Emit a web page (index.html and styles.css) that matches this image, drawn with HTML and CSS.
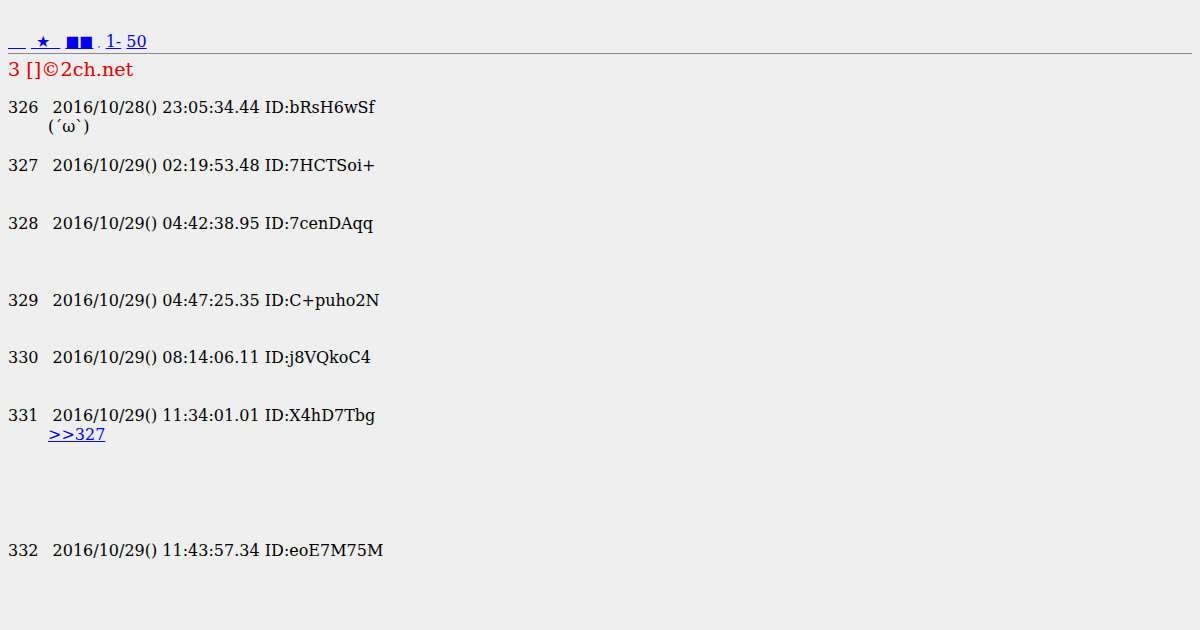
FILE: index.html
```html
<!DOCTYPE html>
<html>
<head>
<meta charset="utf-8">
<title>3 []©2ch.net</title>
<link rel="stylesheet" href="styles.css">
</head>
<body>
<div class="topnav"><a href="#" class="gap1">&nbsp;&nbsp;&nbsp;&nbsp;</a> <a href="#">&nbsp;★&nbsp;&nbsp;</a> <a href="#" class="sq">■■</a><span class="comma">,</span> <a href="#">1-</a> <a href="#">50</a></div>
<hr class="rule">
<h1 class="title">3 []©2ch.net</h1>
<dl class="thread">
<dt><span class="num">326</span>2016/10/28() 23:05:34.44 ID:bRsH6wSf</dt>
<dd>(´ω`)<br><br></dd>
<dt><span class="num">327</span>2016/10/29() 02:19:53.48 ID:7HCTSoi+</dt>
<dd><br><br></dd>
<dt><span class="num">328</span>2016/10/29() 04:42:38.95 ID:7cenDAqq</dt>
<dd><br><br><br></dd>
<dt><span class="num">329</span>2016/10/29() 04:47:25.35 ID:C+puho2N</dt>
<dd><br><br></dd>
<dt><span class="num">330</span>2016/10/29() 08:14:06.11 ID:j8VQkoC4</dt>
<dd><br><br></dd>
<dt><span class="num">331</span>2016/10/29() 11:34:01.01 ID:X4hD7Tbg</dt>
<dd><a href="#">&gt;&gt;327</a><br><br><br><br><br><br></dd>
<dt><span class="num">332</span>2016/10/29() 11:43:57.34 ID:eoE7M75M</dt>
<dd><br><br></dd>
</dl>
</body>
</html>
```
FILE: styles.css
```css
html, body {
  background: #efefef;
}
body {
  margin: 8px;
  color: #000;
  font-family: "DejaVu Serif", serif;
  font-size: 16px;
}
a {
  color: #0000ee;
}
.topnav {
  padding-top: 24px;
  white-space: nowrap;
  height: 19px;
}
.gap1 {
  font-size: 14.1px;
}
.sq {
  font-family: "Noto Sans CJK JP", "DejaVu Sans", sans-serif;
  font-size: 14px;
  line-height: 14px;
}
.comma {
  font-size: 10px;
  color: #0000ee;
  margin-left: 4px;
}
.rule {
  border: 0;
  height: 1px;
  background: #888;
  color: #888;
  margin: 2px -8px 0 0;
}
.title {
  color: #e00000;
  font-size: 19.2px;
  font-weight: normal;
  margin: 4px 0 0;
}
.thread {
  margin: 17px 0 16px;
  line-height: 19.25px;
}
.thread dt {
  margin: 0;
}
.thread dd {
  margin: 0 0 0 40px;
}
.num {
  margin-right: 14px;
}
```
